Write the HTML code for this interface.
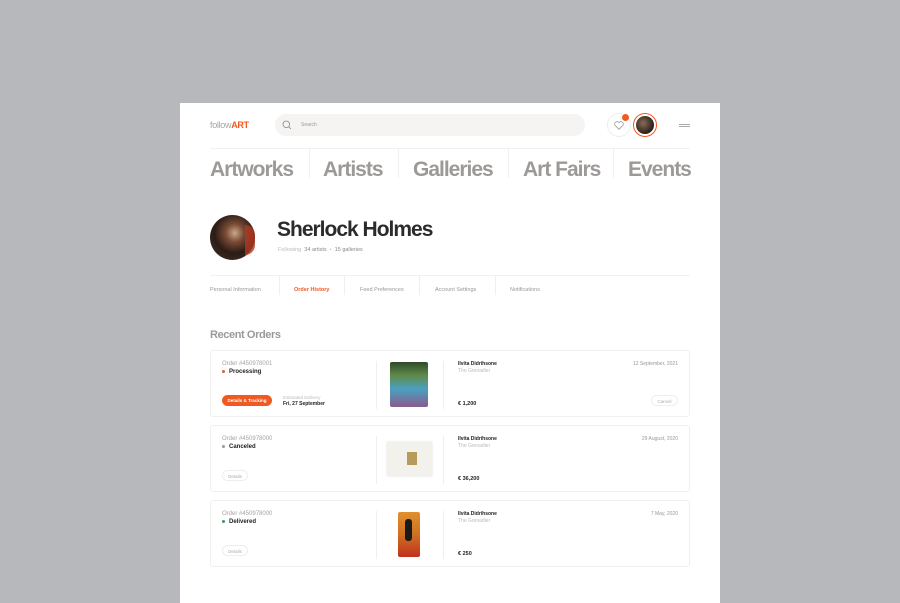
<!DOCTYPE html>
<html><head><meta charset="utf-8"><style>
*{margin:0;padding:0;box-sizing:border-box}
body{width:900px;height:591px;background:#b6b8bb;font-family:"Liberation Sans",sans-serif;position:relative;overflow:hidden}
.card{position:absolute;left:180px;top:103px;width:540px;height:500px;background:#fff}
.a{position:absolute;white-space:nowrap}
.nav{top:158px;font-size:21px;font-weight:bold;color:#9d9997;letter-spacing:-1px}
.vd{position:absolute;width:1px;background:#f0efee}
.tab{top:287px;font-size:5.5px;color:#9a9795}
.oc{position:absolute;left:210px;width:480px;height:67px;border:1px solid #f1f0ef;border-radius:3px}
.oc .num{left:11px;top:10px;font-size:6px;color:#a6a3a1}
.oc .st{left:11px;top:18px;font-size:6px;font-weight:bold;color:#222}
.oc .st i{display:inline-block;width:3px;height:3px;border-radius:50%;margin-right:4px;vertical-align:middle}
.oc .d1{position:absolute;left:165px;top:10px;width:1px;height:48px;background:#f0efee}
.oc .d2{position:absolute;left:232px;top:10px;width:1px;height:48px;background:#f0efee}
.oc .art{left:247px;top:10px;font-size:5px;font-weight:bold;color:#222}
.oc .sub{left:247px;top:17px;font-size:5px;color:#bbb}
.oc .dt{right:11px;top:10px;font-size:5px;color:#999}
.oc .pr{left:247px;top:50px;font-size:5.5px;font-weight:bold;color:#222}
.btn{position:absolute;height:11px;border-radius:6px;font-size:4.5px;line-height:11px;text-align:center}
</style></head><body>
<div class="card"></div>
<div class="a" style="left:210px;top:120px;font-size:9px;color:#a8a5a2;letter-spacing:-0.3px">follow<b style="color:#f05a22">ART</b></div>
<div class="a" style="left:275px;top:114px;width:310px;height:22px;border-radius:11px;background:#f5f4f2"></div>
<svg class="a" style="left:282px;top:120px" width="10" height="10" viewBox="0 0 10 10"><circle cx="4.3" cy="4.3" r="3.3" fill="none" stroke="#888" stroke-width="0.8"/><path d="M6.7 6.7L9 9" stroke="#888" stroke-width="0.8"/></svg>
<div class="a" style="left:301px;top:122px;font-size:5px;color:#999">Search</div>
<div class="a" style="left:607px;top:113px;width:24px;height:24px;border-radius:50%;border:1px solid #eee;background:#fff"></div>
<svg class="a" style="left:614px;top:121px" width="10" height="9" viewBox="0 0 10 9"><path d="M5 8.3L1.2 4.5A2.2 2.2 0 0 1 5 1.6A2.2 2.2 0 0 1 8.8 4.5Z" fill="none" stroke="#999" stroke-width="0.8"/></svg>
<div class="a" style="left:622px;top:114px;width:7px;height:7px;border-radius:50%;background:#f05a22"></div>
<div class="a" style="left:633px;top:113px;width:24px;height:24px;border-radius:50%;border:1.2px solid #f05a22;background:#fff"></div>
<div class="a" style="left:636px;top:116px;width:18px;height:18px;border-radius:50%;background:radial-gradient(circle at 40% 40%,#8a6a55,#2a1e18 70%)"></div>
<div class="a" style="left:679px;top:124px;width:11px;height:1px;background:#aaa"></div>
<div class="a" style="left:679px;top:126px;width:11px;height:1px;background:#aaa"></div>
<div class="a" style="left:210px;top:148px;width:480px;height:1px;background:#f2f1f0"></div>
<div class="vd" style="left:309px;top:148px;height:30px"></div>
<div class="vd" style="left:398px;top:148px;height:30px"></div>
<div class="vd" style="left:508px;top:148px;height:30px"></div>
<div class="vd" style="left:613px;top:148px;height:30px"></div>
<div class="a nav" style="left:210px">Artworks</div>
<div class="a nav" style="left:323px">Artists</div>
<div class="a nav" style="left:413px">Galleries</div>
<div class="a nav" style="left:523px">Art Fairs</div>
<div class="a nav" style="left:628px">Events</div>
<div class="a" style="left:210px;top:215px;width:45px;height:45px;border-radius:50%;background:radial-gradient(circle at 55% 40%,#c9a88a 0,#7a4a35 25%,#2a1c16 55%,#3b2a20 80%),#333"></div>
<div class="a" style="left:245px;top:225px;width:10px;height:30px;border-radius:0 20px 20px 0;background:#b03a22;opacity:.8"></div>
<div class="a" style="left:277px;top:218px;font-size:21px;font-weight:bold;color:#2b2b2b;letter-spacing:-1px">Sherlock Holmes</div>
<div class="a" style="left:278px;top:247px;font-size:5.5px;color:#bbb">Following &nbsp;<span style="color:#888">34 artists</span> &nbsp;•&nbsp; <span style="color:#888">15 galleries</span></div>
<div class="a" style="left:210px;top:275px;width:480px;height:1px;background:#f2f1f0"></div>
<div class="vd" style="left:279px;top:275px;height:20px"></div>
<div class="vd" style="left:344px;top:275px;height:20px"></div>
<div class="vd" style="left:419px;top:275px;height:20px"></div>
<div class="vd" style="left:495px;top:275px;height:20px"></div>
<div class="a tab" style="left:210px">Personal Information</div>
<div class="a tab" style="left:294px;color:#f05a22;font-weight:bold">Order History</div>
<div class="a tab" style="left:360px">Feed Preferences</div>
<div class="a tab" style="left:435px">Account Settings</div>
<div class="a tab" style="left:510px">Notifications</div>
<div class="a" style="left:210px;top:329px;font-size:11px;font-weight:bold;color:#9d9997;letter-spacing:-0.4px">Recent Orders</div>

<div class="oc" style="top:350px">
<div class="a num">Order #450978001</div>
<div class="a st"><i style="background:#f05a22"></i>Processing</div>
<div class="btn" style="left:11px;top:44px;width:50px;background:#f05a22;color:#fff;font-weight:bold">Details &amp; Tracking</div>
<div class="a" style="left:72px;top:44px;font-size:4.5px;color:#bbb">Estimated Delivery</div>
<div class="a" style="left:72px;top:50px;font-size:5px;font-weight:bold;color:#222">Fri, 27 September</div>
<div class="d1"></div>
<div class="a" style="left:179px;top:11px;width:38px;height:45px;border-radius:2px;background:linear-gradient(180deg,#2f4a2a,#5f8a4a 30%,#4aa0c0 60%,#8a5a8a)"></div>
<div class="d2"></div>
<div class="a art">Ilvita Didrihsone</div><div class="a sub">The Grenadier</div>
<div class="a dt">12 September, 2021</div>
<div class="a pr">€ 1,200</div>
<div class="btn" style="right:11px;top:44px;width:27px;border:1px solid #eee;color:#aaa">Cancel</div>
</div>

<div class="oc" style="top:425px">
<div class="a num">Order #450978000</div>
<div class="a st"><i style="background:#999"></i>Canceled</div>
<div class="btn" style="left:11px;top:44px;width:26px;border:1px solid #eee;color:#aaa">Details</div>
<div class="d1"></div>
<div class="a" style="left:176px;top:16px;width:45px;height:34px;background:#f3f1ec;box-shadow:0 0 2px #ddd"></div>
<div class="a" style="left:196px;top:26px;width:10px;height:13px;background:#b89a5a"></div>
<div class="d2"></div>
<div class="a art">Ilvita Didrihsone</div><div class="a sub">The Grenadier</div>
<div class="a dt">29 August, 2020</div>
<div class="a pr">€ 36,200</div>
</div>

<div class="oc" style="top:500px">
<div class="a num">Order #450978000</div>
<div class="a st"><i style="background:#3a9a5a"></i>Delivered</div>
<div class="btn" style="left:11px;top:44px;width:26px;border:1px solid #eee;color:#aaa">Details</div>
<div class="d1"></div>
<div class="a" style="left:187px;top:11px;width:22px;height:45px;border-radius:2px;background:linear-gradient(180deg,#e09030,#d07020 50%,#c03020)"></div>
<div class="a" style="left:194px;top:18px;width:7px;height:22px;border-radius:3px;background:#1a1a1a"></div>
<div class="d2"></div>
<div class="a art">Ilvita Didrihsone</div><div class="a sub">The Grenadier</div>
<div class="a dt">7 May, 2020</div>
<div class="a pr">€ 250</div>
</div>
</body></html>
